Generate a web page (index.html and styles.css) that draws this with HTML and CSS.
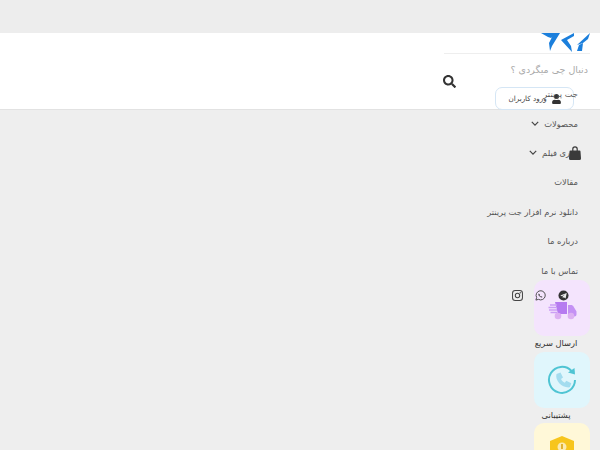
FILE: index.html
```html
<!DOCTYPE html>
<html lang="fa" dir="rtl">
<head>
<meta charset="utf-8">
<title>جت پرینتر</title>
<link rel="stylesheet" href="styles.css">
</head>
<body>
<div class="top-strip"></div>
<header class="header">
  <div class="logo-row">
    <svg class="logo" viewBox="0 0 50 20" width="50" height="20" aria-hidden="true">
      <path d="M1 0h17l-7 5-3-1z" fill="#1b7fdc"/>
      <path d="M14 0l6 0-8 13-2 5-1-8z" fill="#1b7fdc"/>
      <path d="M34 0L21 7l11 12-1-6-4-6 7-4z" fill="#1b7fdc"/>
      <path d="M50 0L37 12l6-2 5-4z" fill="#1b7fdc"/>
      <path d="M37 18l2-6 4-2-1 8z" fill="#1b7fdc"/>
    </svg>
  </div>
  <div class="search-row">
    <span class="search-text">دنبال چی میگردی ؟</span>
    <svg class="search-icon" viewBox="0 0 512 512" width="13" height="13" aria-hidden="true">
      <path d="M505 442.700L405.300 343c-4.500-4.500-10.600-7-17-7H372c27.600-35.300 44-79.700 44-128C416 93.100 322.900 0 208 0S0 93.100 0 208s93.100 208 208 208c48.300 0 92.700-16.400 128-44v16.300c0 6.400 2.500 12.500 7 17l99.700 99.700c9.400 9.400 24.600 9.400 33.900 0l28.300-28.300c9.400-9.400 9.400-24.600.1-34zM208 336c-70.700 0-128-57.200-128-128 0-70.700 57.200-128 128-128 70.700 0 128 57.200 128 128 0 70.700-57.200 128-128 128z" fill="#333"/>
    </svg>
  </div>
  <a class="login">
    <svg class="login-icon" viewBox="0 0 448 512" width="9" height="10" aria-hidden="true">
      <path d="M224 256a128 128 0 1 0 0-256 128 128 0 0 0 0 256zm90 32h-17a174 174 0 0 1-146 0h-17A134 134 0 0 0 0 422v42a48 48 0 0 0 48 48h352a48 48 0 0 0 48-48v-42a134 134 0 0 0-134-134z" fill="#333"/>
    </svg>
    <span>ورود کاربران</span>
  </a>
</header>
<nav class="nav">
  <a class="nav-item">جت پرینتر</a>
  <a class="nav-item">محصولات<svg class="chev" viewBox="0 0 10 6" width="8" height="5" aria-hidden="true"><path d="M1 1l4 4 4-4" fill="none" stroke="#444" stroke-width="1.500"/></svg></a>
  <a class="nav-item">روری فیلم<svg class="chev" viewBox="0 0 10 6" width="8" height="5" aria-hidden="true"><path d="M1 1l4 4 4-4" fill="none" stroke="#444" stroke-width="1.500"/></svg>
    <svg class="bag" viewBox="0 0 12 14" width="12" height="14" aria-hidden="true"><path d="M1.500 4.500h9a1 1 0 0 1 1 1l.5 7a1.500 1.500 0 0 1-1.500 1.500h-9A1.500 1.500 0 0 1 0 12.500l.5-7a1 1 0 0 1 1-1z" fill="#3a3a3a"/><path d="M3.800 5V3a2.200 2.200 0 0 1 4.400 0v2" fill="none" stroke="#3a3a3a" stroke-width="1.200"/></svg>
  </a>
  <a class="nav-item">مقالات</a>
  <a class="nav-item">دانلود نرم افزار جت پرینتر</a>
  <a class="nav-item">درباره ما</a>
  <a class="nav-item">تماس با ما</a>
</nav>
<div class="social">
  <svg viewBox="0 0 12 12" width="11" height="11" aria-hidden="true"><circle cx="6" cy="6" r="5.500" fill="#333"/><path d="M2.500 6l7-2.700-1.200 6-2-1.500-1 1-.3-1.800 3-2.400-3.700 2.200z" fill="#eee"/></svg>
  <svg viewBox="0 0 12 12" width="11" height="11" aria-hidden="true"><path d="M1 11l.8-2.800A5 5 0 1 1 3.800 10.200z" fill="none" stroke="#444" stroke-width="1"/><path d="M4 3.700c-.8 1 0 2.600 1.200 3.500s2.400 1.400 3 .5l-1-1-.7.400c-.7-.3-1.200-.8-1.500-1.500l.4-.7z" fill="#444"/></svg>
  <svg viewBox="0 0 12 12" width="11" height="11" aria-hidden="true"><rect x=".6" y=".6" width="10.800" height="10.800" rx="3" fill="none" stroke="#444" stroke-width="1.100"/><circle cx="6" cy="6" r="2.400" fill="none" stroke="#444" stroke-width="1.100"/><circle cx="9" cy="3" r=".7" fill="#444"/></svg>
</div>
<section class="features">
  <div class="feature">
    <div class="card card-purple">
      <svg viewBox="0 0 30 30" width="30" height="30" aria-hidden="true">
        <path d="M8 9h12v12H11z" fill="#b67bf0"/>
        <path d="M21 12h3c1 0 2 .5 2.500 1.500l3 5v3a2 2 0 0 1-2 2H21z" fill="#c491f4"/>
        <path d="M3 12h7M1.500 14.500h8M2 17h8M3.500 19.500h7" stroke="#cb9ff5" stroke-width="1.400"/>
        <circle cx="11" cy="23" r="3.300" fill="#dcb0f2"/><circle cx="24" cy="23" r="3.300" fill="#dcb0f2"/>
      </svg>
    </div>
    <span class="label">ارسال سریع</span>
  </div>
  <div class="feature">
    <div class="card card-blue">
      <svg viewBox="0 0 30 30" width="30" height="30" aria-hidden="true">
        <path d="M24.500 6A13 13 0 1 0 28 15" fill="none" stroke="#4fc4d3" stroke-width="2"/>
        <path d="M21 7.500l6.500-4.500.5 6.500z" fill="#4fc4d3"/>
        <path d="M9.500 9l4-1.500 2.500 5-2 1.500c.8 1.800 2 3 3.800 3.800l1.500-2 5 2.500-1.500 4C16 23.500 7.500 16 9.500 9z" fill="#a3dcef"/>
      </svg>
    </div>
    <span class="label">پشتیبانی</span>
  </div>
  <div class="feature">
    <div class="card card-yellow">
      <svg viewBox="0 0 24 30" width="24" height="30" aria-hidden="true">
        <path d="M12 0l12 5v10c0 7-5 12-12 15C5 27 0 22 0 15V5z" fill="#f7c51c"/>
        <circle cx="12" cy="11" r="4.500" fill="#fbeab0"/>
        <rect x="11.200" y="8" width="1.600" height="5" fill="#d9a416"/>
      </svg>
    </div>
  </div>
</section>
</body>
</html>
```
FILE: styles.css
```css
* { box-sizing: border-box; }
html, body { margin: 0; height: 450px; overflow: hidden; }
body {
  background: #eeeeee;
  font-family: "DejaVu Sans", "Noto Sans", sans-serif;
  color: #555;
  position: relative;
}
.top-strip { height: 33px; background: #ededed; }
.header {
  height: 77px;
  background: #fff;
  border-bottom: 1px solid #e2e2e2;
  position: relative;
}
.logo-row {
  width: 146px;
  height: 21px;
  margin-right: 10px;
  border-bottom: 1px solid #eee;
  display: flex;
}
.logo { display: block; }
.search-row {
  display: flex;
  align-items: flex-start;
  padding-right: 12px;
  width: 158px;
  margin-top: 9px;
  position: relative;
  justify-content: space-between;
}
.search-text { font-size: 9.500px; color: #aaa; line-height: 14px; }
.search-icon { margin-top: 12px; margin-left: 1px; }
.login {
  position: absolute;
  top: 54px;
  right: 26px;
  width: 79px;
  height: 23px;
  border: 1px solid #d5e6f5;
  border-radius: 7px;
  display: flex;
  align-items: center;
  justify-content: center;
  gap: 5px;
  font-size: 7.200px;
  color: #444;
}
.nav {
  margin-top: -30.500px;
  padding-right: 22px;
  display: flex;
  flex-direction: column;
  position: relative;
}
.nav-item {
  height: 29.400px;
  display: flex;
  align-items: center;
  gap: 5px;
  font-size: 8.300px;
  color: #555;
  position: relative;
}
.chev { flex: none; }
.bag { position: absolute; right: -3px; top: 8px; }
.social {
  display: flex;
  gap: 12px;
  padding-right: 31px;
  margin-top: 4.500px;
  height: 11px;
  position: relative;
  z-index: 2;
}
.features {
  position: absolute;
  top: 280px;
  right: 10px;
  width: 56px;
  display: flex;
  flex-direction: column;
}
.feature { display: flex; flex-direction: column; align-items: center; }
.card {
  width: 56px;
  height: 56px;
  flex: none;
  border-radius: 10px;
  display: flex;
  align-items: center;
  justify-content: center;
}
.card-purple { background: #f4e4fd; }
.card-blue { background: #e0f6fc; }
.card-yellow { background: #fff8d8; align-items: flex-start; padding-top: 13px; }
.label { font-size: 8.300px; line-height: 15.500px; color: #333; white-space: nowrap; margin-right: 12px; }
```
